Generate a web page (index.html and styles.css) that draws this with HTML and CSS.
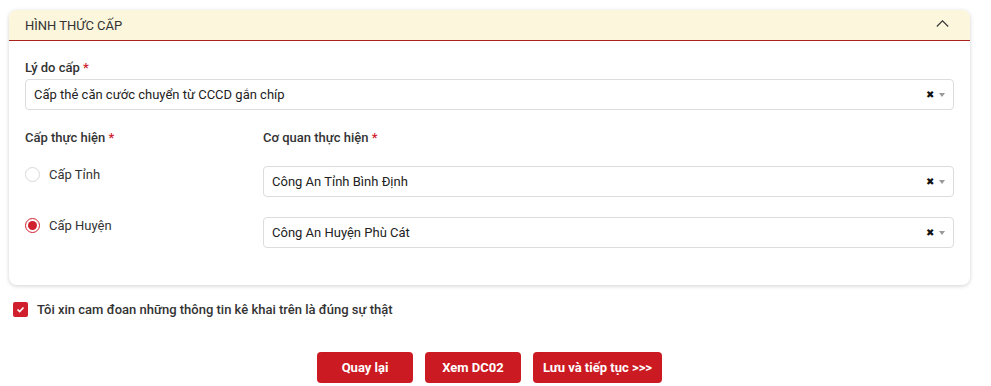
FILE: index.html
```html
<!DOCTYPE html>
<html lang="vi">
<head>
  <meta charset="UTF-8" />
  <meta name="viewport" content="width=device-width, initial-scale=1.0"/>
  <title>Hình thức cấp</title>
  <link rel="stylesheet" href="styles.css">
</head>
<body>
  <div class="page">
    <section class="card">
      <div class="card-header">
        <span>HÌNH THỨC CẤP</span>
        <svg class="chevron" width="13" height="7" viewBox="0 0 13 7"><path d="M0.8 6.5 L6.5 0.8 L12.2 6.5" fill="none" stroke="#333" stroke-width="1.1"/></svg>
      </div>
      <div class="card-body">
        <div class="field">
          <label class="label">Lý do cấp <span class="req">*</span></label>
          <div class="select">
            <span class="value">Cấp thẻ căn cước chuyển từ CCCD gắn chíp</span>
            <span class="clear">✖</span>
            <span class="arrow"></span>
          </div>
        </div>

        <div class="grid">
          <div>
            <label class="label">Cấp thực hiện <span class="req">*</span></label>
            <div class="radio-row">
              <span class="radio"></span>
              <span>Cấp Tỉnh</span>
            </div>
            <div class="radio-row">
              <span class="radio checked"></span>
              <span>Cấp Huyện</span>
            </div>
          </div>
          <div>
            <label class="label">Cơ quan thực hiện <span class="req">*</span></label>
            <div class="select select-gap">
              <span class="value">Công An Tỉnh Bình Định</span>
              <span class="clear">✖</span>
              <span class="arrow"></span>
            </div>
            <div class="select select-gap2">
              <span class="value">Công An Huyện Phù Cát</span>
              <span class="clear">✖</span>
              <span class="arrow"></span>
            </div>
          </div>
        </div>
      </div>
    </section>

    <div class="confirm">
      <span class="checkbox">
        <svg width="9" height="7" viewBox="0 0 9 7"><path d="M1.5 3.5 L3.7 5.6 L7.5 1.5" fill="none" stroke="#fff" stroke-width="1.6"/></svg>
      </span>
      <span>Tôi xin cam đoan những thông tin kê khai trên là đúng sự thật</span>
    </div>

    <div class="actions">
      <button class="btn">Quay lại</button>
      <button class="btn">Xem DC02</button>
      <button class="btn btn-wide">Lưu và tiếp tục &gt;&gt;&gt;</button>
    </div>
  </div>
</body>
</html>
```

FILE: styles.css
```css
body {
  margin: 0;
  font-family: Roboto, 'Liberation Sans', Arial, sans-serif;
  font-size: 13px;
  color: #222;
  background: #fff;
}

.page {
  padding: 10px 21px 0 9px;
}

.card {
  background: #fff;
  border-radius: 8px;
  box-shadow: 0 1px 4px rgba(0,0,0,0.18);
}

.card-header {
  display: flex;
  align-items: center;
  justify-content: space-between;
  height: 30px;
  padding: 0 21px 0 16px;
  background: #fcf6dc;
  border-bottom: 1px solid #a8231c;
  border-radius: 8px 8px 0 0;
  color: #333;
  font-size: 13px;
}

.chevron {
  margin-top: -3px;
}

.card-body {
  padding: 17px 16px 37px;
}

.label {
  display: block;
  font-weight: 500;
  color: #333;
  line-height: 20px;
  margin-bottom: 1px;
}

.req {
  color: #d0202e;
}

.select {
  display: flex;
  align-items: center;
  height: 29px;
  border: 1px solid #dcdcdc;
  border-radius: 4px;
  padding: 0 8px;
  color: #222;
}

.value {
  flex: 1;
}

.clear {
  font-size: 10px;
  color: #111;
  margin-right: 5px;
}

.arrow {
  width: 0;
  height: 0;
  border-left: 3px solid transparent;
  border-right: 3px solid transparent;
  border-top: 4px solid #999;
}

.grid {
  display: grid;
  grid-template-columns: 238px 1fr;
  margin-top: 18px;
}

.select-gap {
  margin-top: 18px;
}

.select-gap2 {
  margin-top: 20px;
}

.radio-row {
  display: flex;
  align-items: center;
  gap: 9px;
  height: 20px;
  color: #333;
}

.radio-row:first-of-type {
  margin-top: 16px;
}

.radio-row + .radio-row {
  margin-top: 31px;
}

.radio {
  width: 13px;
  height: 13px;
  border: 1px solid #d9d9d9;
  border-radius: 50%;
  display: flex;
  align-items: center;
  justify-content: center;
  margin-top: 1px;
}

.radio.checked {
  border-color: #d0202e;
}

.radio.checked::after {
  content: '';
  width: 9px;
  height: 9px;
  border-radius: 50%;
  background: #d0202e;
}

.confirm {
  display: flex;
  align-items: center;
  gap: 9px;
  margin: 17px 0 0 4px;
  font-weight: 500;
  color: #333;
}

.checkbox {
  width: 15px;
  height: 15px;
  background: #d0202e;
  border-radius: 2px;
  display: flex;
  align-items: center;
  justify-content: center;
}

.actions {
  display: flex;
  justify-content: center;
  gap: 12px;
  margin-top: 35px;
}

.btn {
  width: 96px;
  height: 31px;
  background: #cc1a22;
  color: #fff;
  border: none;
  border-radius: 4px;
  font-family: Roboto, 'Liberation Sans', Arial, sans-serif;
  font-size: 13px;
  font-weight: 700;
  cursor: pointer;
}

.btn-wide {
  width: 129px;
}
```
